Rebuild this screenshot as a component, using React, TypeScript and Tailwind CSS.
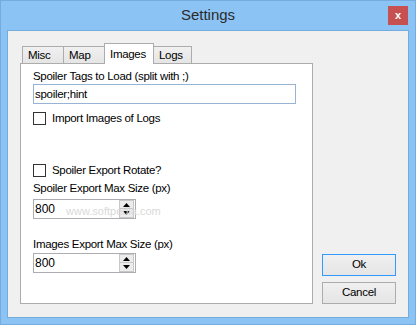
import React, { useState } from "react";

const font = { fontFamily: '"Liberation Sans", Arial, sans-serif' };

const Spinner = ({ value }: { value: string }) => (
  <div className="flex h-[20px] w-[103px] border border-[#abadb3] bg-white">
    <input
      value={value}
      readOnly
      className="min-w-0 flex-1 bg-transparent pl-[1px] text-[12px] leading-[18px] text-black outline-none"
    />
    <div className="mr-[1px] flex w-[15px] flex-col">
      <button className="flex h-[9px] items-center justify-center border border-[#c8c8c8] bg-[#ececec]">
        <svg width="7" height="4" viewBox="0 0 7 4">
          <path d="M3.5 0 L7 4 L0 4 Z" fill="#000" />
        </svg>
      </button>
      <button className="flex h-[9px] items-center justify-center border border-t-0 border-[#c8c8c8] bg-[#ececec]">
        <svg width="7" height="4" viewBox="0 0 7 4">
          <path d="M0 0 L7 0 L3.5 4 Z" fill="#000" />
        </svg>
      </button>
    </div>
  </div>
);

const Check = ({ label }: { label: string }) => {
  const [on, setOn] = useState(false);
  return (
    <label className="flex h-[15px] items-center gap-[6px] text-[11.5px] leading-[15px] tracking-[-0.3px] text-black">
      <span
        onClick={() => setOn(!on)}
        className="flex h-[13px] w-[13px] items-center justify-center border border-[#333333] bg-white"
      >
        {on && <span className="text-[10px]">✓</span>}
      </span>
      {label}
    </label>
  );
};

const tabs = ["Misc", "Map", "Images", "Logs"];
const tabWidths: Record<string, string> = {
  Misc: "w-[42px]",
  Map: "w-[42px]",
  Images: "w-[50px]",
  Logs: "w-[39px]",
};

export default function App() {
  const [active, setActive] = useState("Images");

  return (
    <div
      className="flex h-[325px] w-[416px] flex-col border border-[#74acde] bg-[#8bc3f5]"
      style={font}
    >
      {/* title bar */}
      <div className="grid h-[29px] grid-cols-[1fr_auto_1fr]">
        <div />
        <div className="pt-[4px] text-[15px] leading-[20px] text-[#2b2b2b]">
          Settings
        </div>
        <div className="flex justify-end pt-[5px] pr-[7px]">
          <button className="flex h-[19px] w-[20px] items-center justify-center bg-[#c75050] text-[11px] font-bold leading-none text-white">
            x
          </button>
        </div>
      </div>

      {/* client area */}
      <div className="mx-[6px] mb-[6px] flex flex-1 items-end border border-[#74acde] bg-[#f0f0f0] pt-[12px] pr-[12px] pb-[13px] pl-[12px]">
        <div className="flex h-full w-[293px] flex-col">
          <div className="flex h-[20px] items-end pl-[2px]">
            {tabs.map((t, i) => {
              const sel = t === active;
              return (
                <button
                  key={t}
                  onClick={() => setActive(t)}
                  className={
                    (i > 0 ? "-ml-px " : "") +
                    tabWidths[t] +
                    " " +
                    (sel
                      ? "relative z-10 -mb-px h-[21px] border border-b-0 border-[#acacac] bg-white pl-[5px] text-left text-[11.5px] leading-[18px] tracking-[-0.3px] text-black"
                      : "h-[17px] border border-b-0 border-[#acacac] bg-gradient-to-b from-[#f0f0f0] to-[#e5e5e5] pl-[5px] text-left text-[11.5px] leading-[17px] tracking-[-0.3px] text-black")
                  }
                >
                  {t}
                </button>
              );
            })}
          </div>

          <div className="relative flex-1 border border-[#acacac] bg-white pt-[5px] pl-[12px]">
            <div className="text-[11.5px] leading-[15px] tracking-[-0.3px] text-black">
              Spoiler Tags to Load (split with ;)
            </div>
            <input
              defaultValue="spoiler;hint"
              className="block h-[20px] w-[263px] border border-[#98b4d4] bg-white px-[1px] text-[11.5px] tracking-[-0.3px] text-black outline-none"
            />
            <div className="mt-[7px]">
              <Check label="Import Images of Logs" />
            </div>
            <div className="mt-[37px]">
              <Check label="Spoiler Export Rotate?" />
            </div>
            <div className="mt-[3px] text-[11.5px] leading-[15px] tracking-[-0.3px] text-black">
              Spoiler Export Max Size (px)
            </div>
            <div className="mt-[3px]">
              <Spinner value="800" />
            </div>
            <div className="mt-[18px] text-[11.5px] leading-[15px] tracking-[-0.3px] text-black">
              Images Export Max Size (px)
            </div>
            <div className="mt-[1px]">
              <Spinner value="800" />
            </div>

            {/* watermark */}
            <div className="pointer-events-none absolute top-[139px] left-[45px] text-[11px] text-[#d9d9d9]">
              www.softpedia.com
            </div>
          </div>
        </div>

        <div className="ml-[9px] flex w-[74px] flex-col gap-[6px]">
          <button className="h-[22px] border border-[#3399ff] bg-gradient-to-b from-[#f0f0f0] to-[#e5e5e5] text-[11.5px] tracking-[-0.3px] text-black">
            Ok
          </button>
          <button className="h-[22px] border border-[#acacac] bg-gradient-to-b from-[#f0f0f0] to-[#e5e5e5] text-[11.5px] tracking-[-0.3px] text-black">
            Cancel
          </button>
        </div>
      </div>
    </div>
  );
}
